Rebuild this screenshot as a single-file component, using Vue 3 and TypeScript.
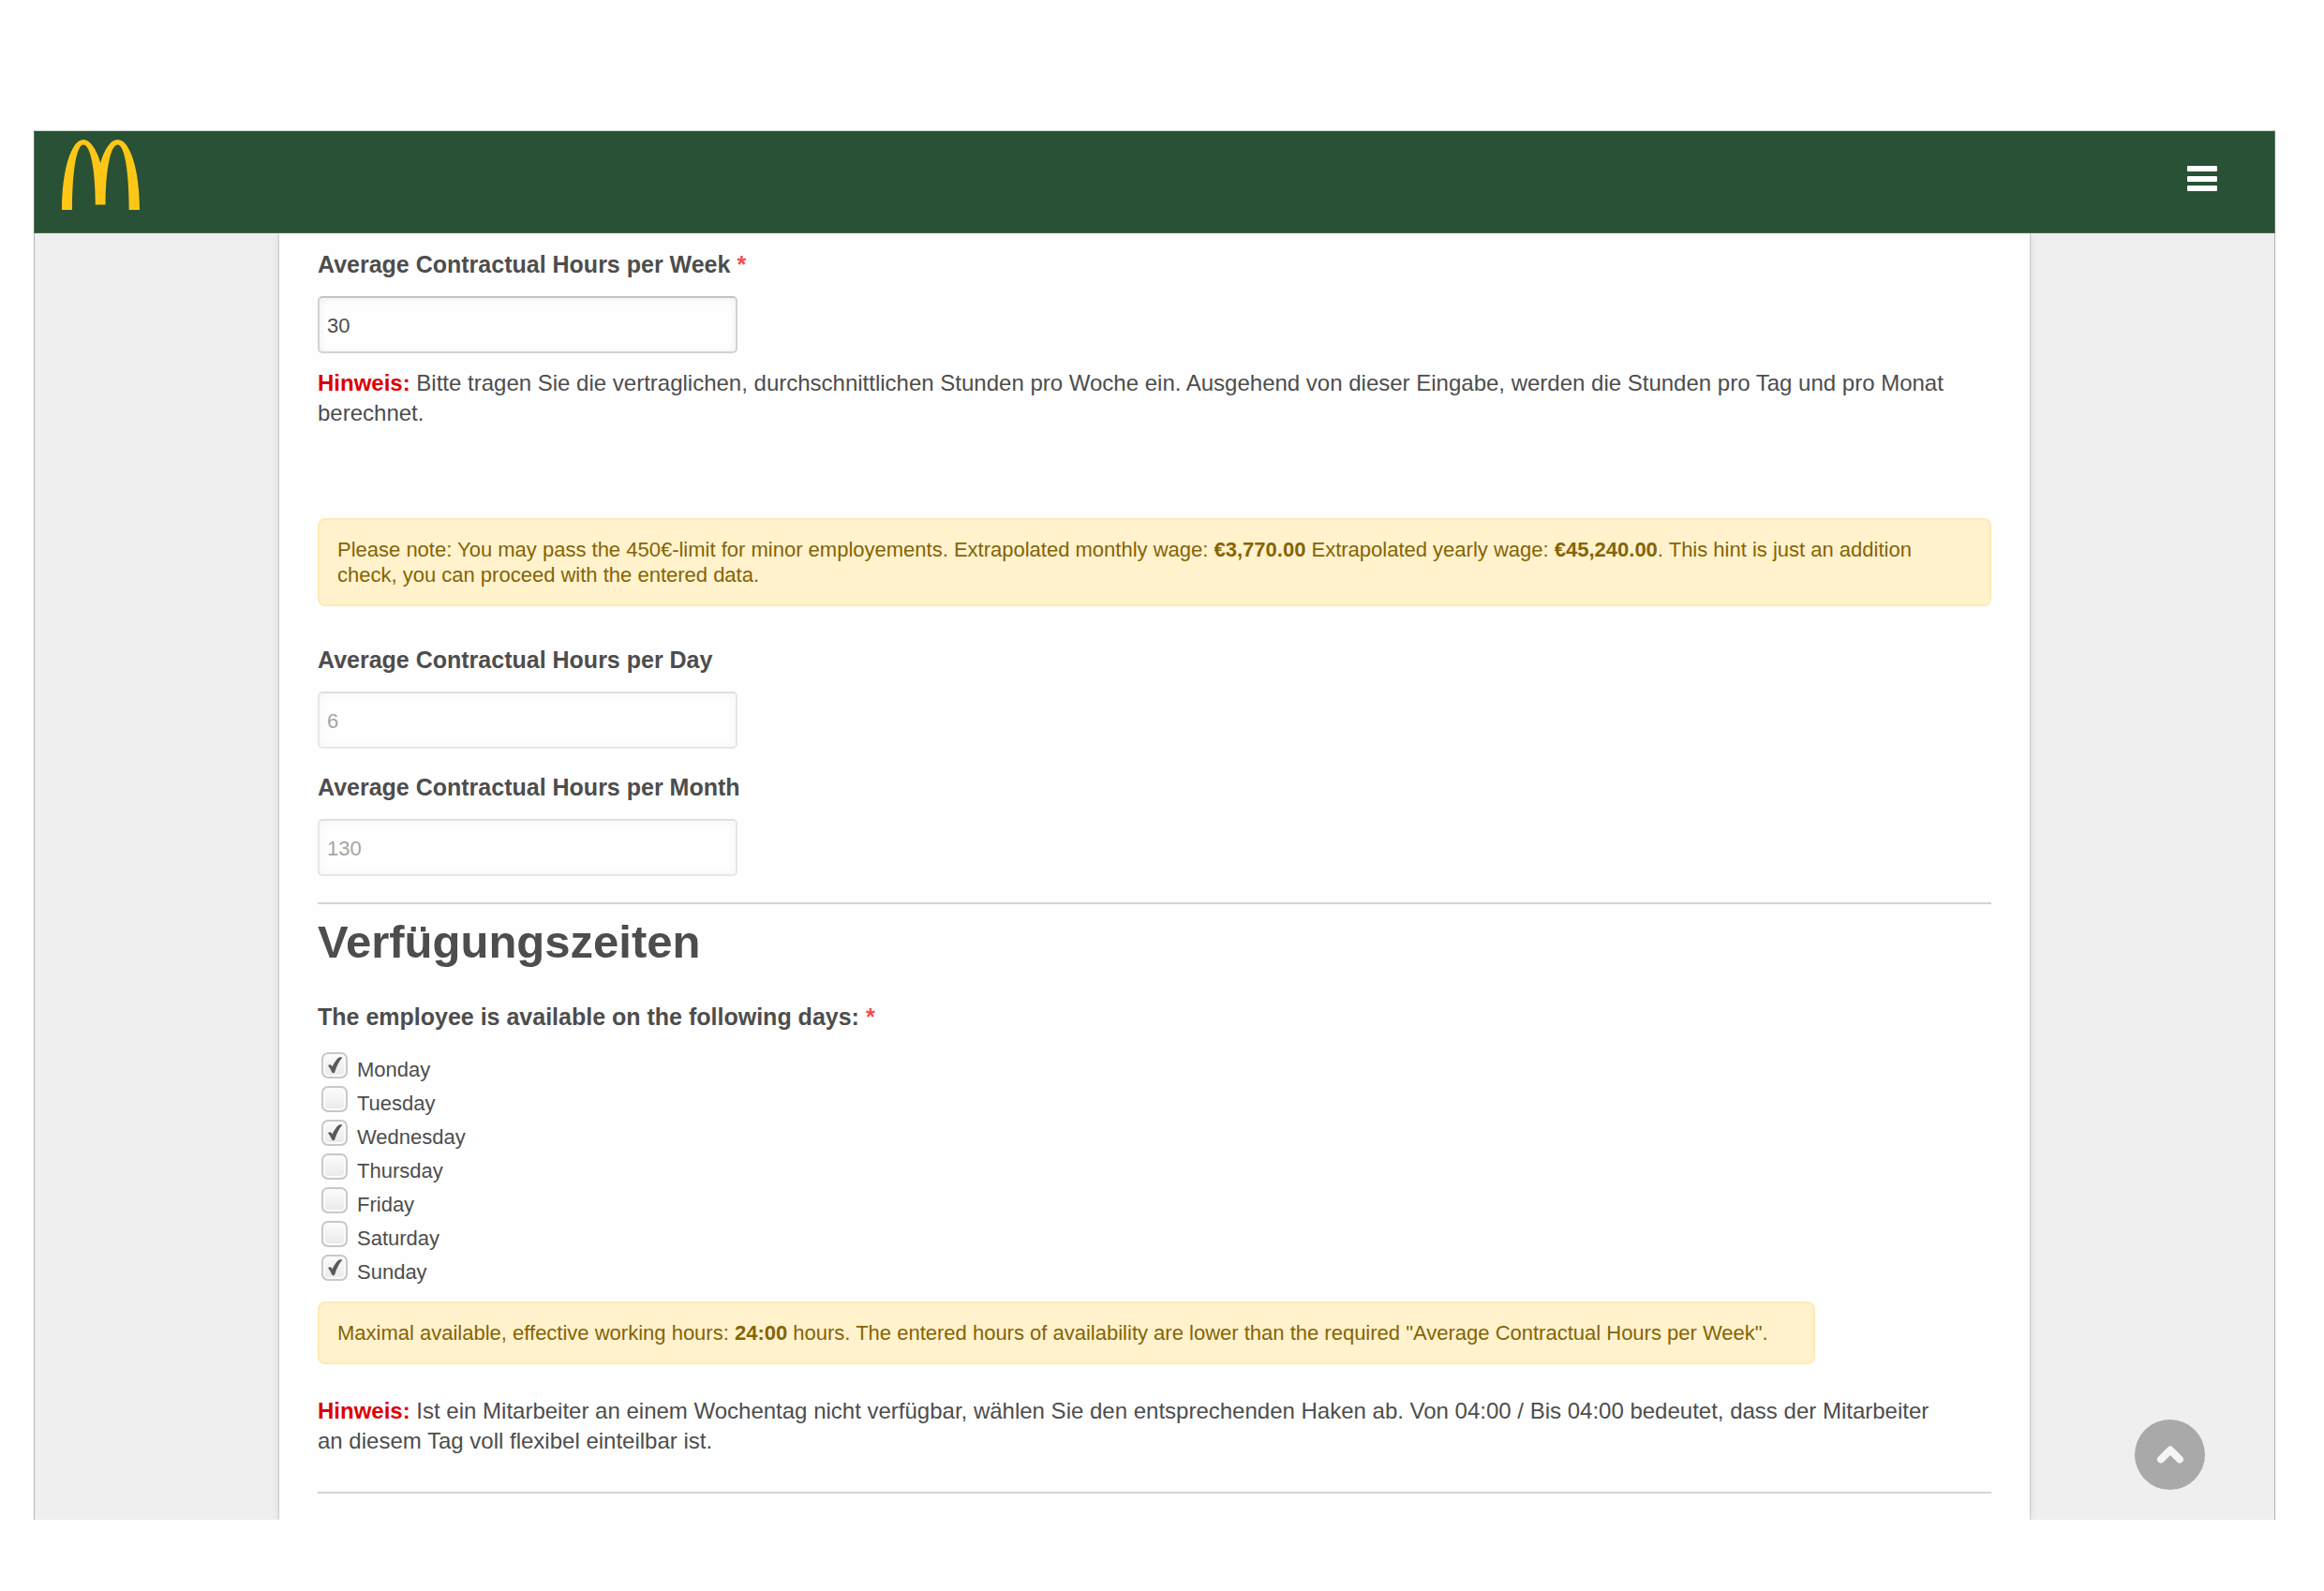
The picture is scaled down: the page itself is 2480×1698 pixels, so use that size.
<script setup lang="ts">
import { ref } from 'vue'

interface Day {
  id: string
  name: string
  available: boolean
}

const hoursPerWeek = ref('30')
const hoursPerDay = ref('6')
const hoursPerMonth = ref('130')

const days = ref<Day[]>([
  { id: 'mon', name: 'Monday', available: true },
  { id: 'tue', name: 'Tuesday', available: false },
  { id: 'wed', name: 'Wednesday', available: true },
  { id: 'thu', name: 'Thursday', available: false },
  { id: 'fri', name: 'Friday', available: false },
  { id: 'sat', name: 'Saturday', available: false },
  { id: 'sun', name: 'Sunday', available: true },
])

function scrollToTop(): void {
  window.scrollTo({ top: 0, behavior: 'smooth' })
}
</script>

<template>
  <div class="page">
    <div class="frame">
      <header class="topbar">
        <a href="#" class="logo" aria-label="Home">
          <svg width="83" height="75" viewBox="0 0 83 75" aria-hidden="true">
            <path
              fill="#ffc715"
              d="M0 75C0 33 10 0 23 0C30 0 37 10 41.2 25C45.5 10 52 0 59.5 0C73 0 83 33 83 75H71.7C71.7 35 67 5.5 59.5 5.5C52 5.5 46.6 32 46.6 69.5H35.8C35.8 32 30.5 5.5 23 5.5C15.5 5.5 11 35 11 75Z"
            />
          </svg>
        </a>
        <button type="button" class="menu" aria-label="Menu">
          <svg width="32" height="28" viewBox="0 0 32 28" aria-hidden="true">
            <g fill="#fff">
              <rect width="32" height="6" rx="1" />
              <rect y="11" width="32" height="6" rx="1" />
              <rect y="21" width="32" height="6" rx="1" />
            </g>
          </svg>
        </button>
      </header>

      <main class="body">
        <form class="paper" @submit.prevent>
          <div class="field">
            <label for="hours-week">Average Contractual Hours per Week <span class="required">*</span></label>
            <input id="hours-week" v-model="hoursPerWeek" type="text" />
          </div>
          <p class="hint hint-hours">
            <strong>Hinweis:</strong> Bitte tragen Sie die vertraglichen, durchschnittlichen Stunden pro Woche ein. Ausgehend von dieser Eingabe, werden die Stunden pro Tag und pro Monat berechnet.
          </p>

          <div class="alert alert-wage" role="alert">
            Please note: You may pass the 450€-limit for minor employements. Extrapolated monthly wage: <b>€3,770.00</b> Extrapolated yearly wage: <b>€45,240.00</b>. This hint is just an addition check, you can proceed with the entered data.
          </div>

          <div class="field field-day">
            <label for="hours-day">Average Contractual Hours per Day</label>
            <input id="hours-day" v-model="hoursPerDay" type="text" disabled />
          </div>
          <div class="field field-month">
            <label for="hours-month">Average Contractual Hours per Month</label>
            <input id="hours-month" v-model="hoursPerMonth" type="text" disabled />
          </div>

          <hr />

          <h1>Verfügungszeiten</h1>

          <fieldset>
            <legend>The employee is available on the following days: <span class="required">*</span></legend>
            <ul>
              <li v-for="day in days" :key="day.id">
                <span class="tick">
                  <input :id="day.id" v-model="day.available" type="checkbox" />
                  <svg v-if="day.available" width="28" height="28" viewBox="0 0 28 28" aria-hidden="true">
                    <path fill="#5a5a5a" d="M7 14.5C8.500 12.600 10.500 12.800 11.500 15.500C14 10.500 16.500 7 18.500 5.800C20 5 21.500 5.200 22.300 5.700C18.800 9.500 16.300 14.500 14.300 21C13.500 22.600 11.800 22.600 11 21C10 18.500 8.800 16 7 14.500Z" />
                  </svg>
                </span>
                <label :for="day.id">{{ day.name }}</label>
              </li>
            </ul>
          </fieldset>

          <div class="alert alert-days" role="alert">
            Maximal available, effective working hours: <b>24:00</b> hours. The entered hours of availability are lower than the required "Average Contractual Hours per Week".
          </div>
          <p class="hint hint-days">
            <strong>Hinweis:</strong> Ist ein Mitarbeiter an einem Wochentag nicht verfügbar, wählen Sie den entsprechenden Haken ab. Von 04:00 / Bis 04:00 bedeutet, dass der Mitarbeiter an diesem Tag voll flexibel einteilbar ist.
          </p>

          <hr class="last-rule" />
        </form>
      </main>

      <button type="button" class="to-top" aria-label="Scroll to top" @click="scrollToTop">
        <svg width="32" height="22" viewBox="0 0 32 22" aria-hidden="true">
          <path d="M6 15.500L16 5.500L26 15.500" fill="none" stroke="#f5f5f5" stroke-width="8" stroke-linecap="round" stroke-linejoin="round" />
        </svg>
      </button>
    </div>
  </div>
</template>

<style>
body {
  margin: 0;
  background: #fefefe;
}
</style>

<style scoped>
.page {
  padding: 139px 52px 76px 36px;
  font-family: "Liberation Sans", Arial, Helvetica, sans-serif;
  font-size: 24px;
  line-height: 32px;
  color: #4d4d4d;
}

.frame {
  position: relative;
  border: 1px solid #b4b4b4;
  border-top: 0;
  border-bottom: 0;
  background: #efefef;
}

.topbar {
  display: flex;
  justify-content: space-between;
  align-items: flex-start;
  box-sizing: border-box;
  height: 110px;
  margin: 0 -1px;
  padding: 9px 61px 0 29px;
  background: #285135;
  border-top: 1px solid #c9d3cc;
  border-bottom: 1px solid #44684f;
  border-left: 1px solid #5b7b65;
  border-right: 1px solid #5b7b65;
}

.logo,
.logo svg,
.menu svg,
.to-top svg {
  display: block;
}

.menu {
  margin-top: 28px;
  padding: 0;
  border: 0;
  background: none;
}

.body {
  padding: 0 261px;
  overflow: hidden;
}

.paper {
  padding: 17px 41px 28px;
  background: #fefefe;
  box-shadow: 0 0 2px rgba(0, 0, 0, 0.3), 0 0 10px rgba(0, 0, 0, 0.1);
}

.field {
  display: flex;
  flex-direction: column;
  align-items: flex-start;
  gap: 18px;
}

.field label,
legend {
  font-size: 25px;
  font-weight: bold;
}

.field-day {
  margin-top: 41px;
}

.field-month {
  margin-top: 25px;
}

.required {
  color: #f04f4f;
}

.field input {
  box-sizing: border-box;
  width: 448px;
  max-width: 100%;
  height: 61px;
  padding: 2px 8px 0;
  border: 2px solid #d2d2d2;
  border-top-color: #c4c4c4;
  border-radius: 5px;
  background: #fefefe;
  box-shadow: inset 0 1px 8px rgba(0, 0, 0, 0.07);
  font-family: inherit;
  font-size: 22px;
  color: #4d4d4d;
}

.field input:disabled {
  opacity: 0.5;
}

.hint {
  margin: 0;
  padding-right: 40px;
}

.hint strong {
  color: #dc0000;
}

.hint-hours {
  margin-top: 16px;
}

.hint-days {
  margin-top: 34px;
}

.alert {
  box-sizing: border-box;
  width: fit-content;
  padding: 18px 19px;
  border: 2px solid #ffeab4;
  border-radius: 8px;
  background: #fff2cd;
  font-size: 22px;
  line-height: 27px;
  color: #856404;
}

.alert-wage {
  margin-top: 96px;
}

.alert-days {
  margin-top: 14px;
  padding-right: 48px;
}

hr {
  height: 2px;
  margin: 28px 0 0;
  border: 0;
  background: #d4d4d4;
}

.last-rule {
  margin-top: 38px;
}

h1 {
  margin: 12px 0 36px;
  font-size: 49px;
  line-height: 56px;
}

fieldset {
  margin: 0;
  padding: 0;
  border: 0;
}

legend {
  padding: 0;
}

ul {
  margin: 22px 0 0;
  padding: 0 0 0 4px;
  list-style: none;
}

li {
  display: flex;
  align-items: flex-start;
  gap: 10px;
  height: 36px;
  font-size: 22px;
  line-height: 38px;
}

.tick {
  position: relative;
  width: 28px;
  height: 28px;
}

.tick input {
  appearance: none;
  display: block;
  box-sizing: border-box;
  width: 28px;
  height: 28px;
  margin: 0;
  border: 2px solid #c8c8c8;
  border-radius: 7px;
  background: linear-gradient(#fcfcfc, #e9e9e9);
  box-shadow: inset 0 0 0 2px #fbfbfb;
}

.tick svg {
  position: absolute;
  inset: 0;
  pointer-events: none;
}

.to-top {
  position: absolute;
  right: 74px;
  bottom: 32px;
  display: flex;
  align-items: center;
  justify-content: center;
  width: 75px;
  height: 75px;
  padding: 0;
  border: 0;
  border-radius: 50%;
  background: #a9a9a9;
}
</style>
